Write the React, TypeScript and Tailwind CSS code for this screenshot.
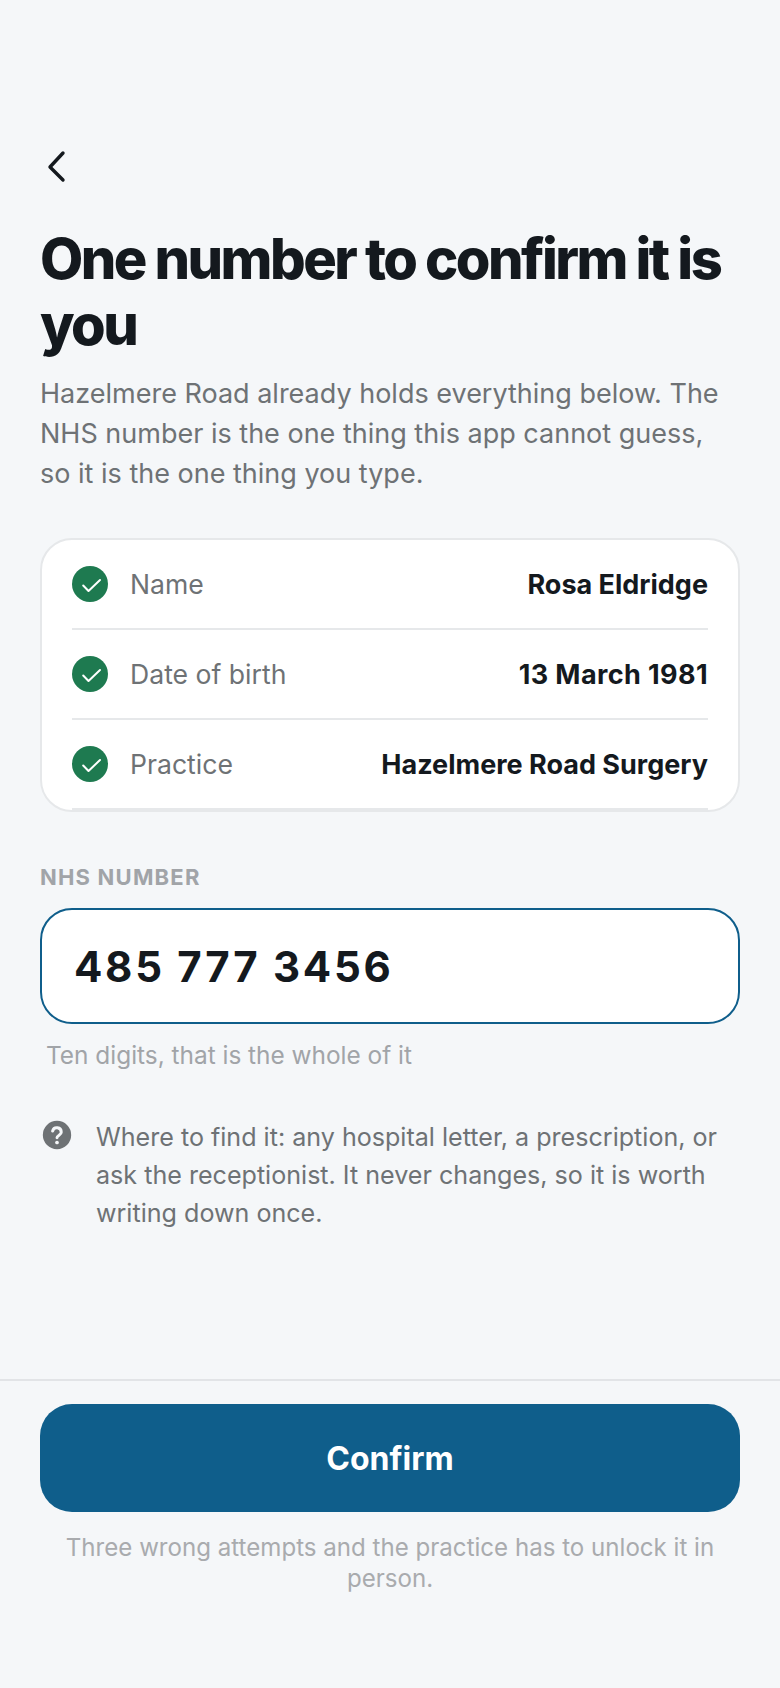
import React from "react";

const rows = [
  { label: "Name", value: "Rosa Eldridge", spacing: "tracking-normal" },
  { label: "Date of birth", value: "13 March 1981", spacing: "tracking-[0.4px]" },
  { label: "Practice", value: "Hazelmere Road Surgery", spacing: "tracking-normal" },
];

function Check() {
  return (
    <span className="flex h-9 w-9 shrink-0 items-center justify-center rounded-full bg-[#1e7a50]">
      <svg width="36" height="36" viewBox="0 0 36 36" fill="none" stroke="#fff" strokeWidth="2" strokeLinecap="round" strokeLinejoin="round">
        <path d="M11.2 19.5 16.5 25 28 14" />
      </svg>
    </span>
  );
}

export default function App() {
  return (
    <div className="flex h-[1688px] w-[780px] flex-col bg-[#f5f7f9] font-['Inter',sans-serif]">
      <main className="flex flex-1 flex-col px-10 pt-[144px]">
        <button className="flex h-11 w-11 items-center justify-start">
          <svg width="36" height="36" viewBox="0 0 36 36" fill="none" stroke="#14191e" strokeWidth="3.4" strokeLinecap="round" strokeLinejoin="round">
            <path d="M23 5 10 19 23 32" />
          </svg>
        </button>
        <h1 className="mt-[38px] text-[56px] leading-[66px] font-extrabold tracking-[-2.55px] text-[#14191e]">
          One number to confirm it is you
        </h1>
        <p className="mt-[16px] text-[27px] leading-[40px] text-[#6e7275]">
          Hazelmere Road already holds everything below. The NHS number is the one thing this app cannot guess, so it is the one thing you type.
        </p>
        <section className="mt-[44px] rounded-[32px] border-2 border-[#e6e8ea] bg-white px-[30px]">
          {rows.map((row) => (
            <div key={row.label} className="flex h-[90px] items-center border-b-2 border-[#e6e8ea]">
              <Check />
              <span className="ml-[22px] pt-[2px] text-[26.6px] text-[#6e7275]">{row.label}</span>
              <span className={`ml-auto pt-[2px] text-[27px] font-bold text-[#14191e] ${row.spacing}`}>{row.value}</span>
            </div>
          ))}
        </section>
        <div className="mt-[51px] text-[22px] leading-[28px] font-bold tracking-[1.2px] text-[#a1a4a8]">NHS NUMBER</div>
        <div className="mt-[17px] flex h-[116px] items-center rounded-[32px] border-2 border-[#0f5e8b] bg-white px-[32px] text-[42px] font-bold tracking-[2.7px] text-[#14191e]">
          485 777 3456
        </div>
        <div className="mt-[13px] ml-[6px] text-[24.4px] leading-[36px] text-[#a1a4a8]">Ten digits, that is the whole of it</div>
        <div className="mt-[45px] flex items-start gap-[22px]">
          <svg width="34" height="34" viewBox="0 0 24 24" className="shrink-0">
            <circle cx="12" cy="12" r="10" fill="#6e7275" />
            <path d="M8.9 9.2a3.1 3.1 0 0 1 6.1.8c0 2-3 2.4-3 4" fill="none" stroke="#f5f7f9" strokeWidth="2.1" strokeLinecap="round" />
            <circle cx="12" cy="17.3" r="1.3" fill="#f5f7f9" />
          </svg>
          <p className="text-[25.1px] leading-[38px] text-[#6e7275]">
            Where to find it: any hospital letter, a prescription, or ask the receptionist. It never changes, so it is worth writing down once.
          </p>
        </div>
      </main>
      <footer className="h-[309px] border-t-2 border-[#e2e4e7] px-10 pt-[23px]">
        <button className="h-[108px] w-full rounded-[32px] bg-[#0f5e8b] pt-[2px] text-[32px] font-bold text-white">Confirm</button>
        <p className="mt-[20px] text-center text-[24.1px] leading-[31px] text-[#a9abae]">
          Three wrong attempts and the practice has to unlock it in person.
        </p>
      </footer>
    </div>
  );
}
